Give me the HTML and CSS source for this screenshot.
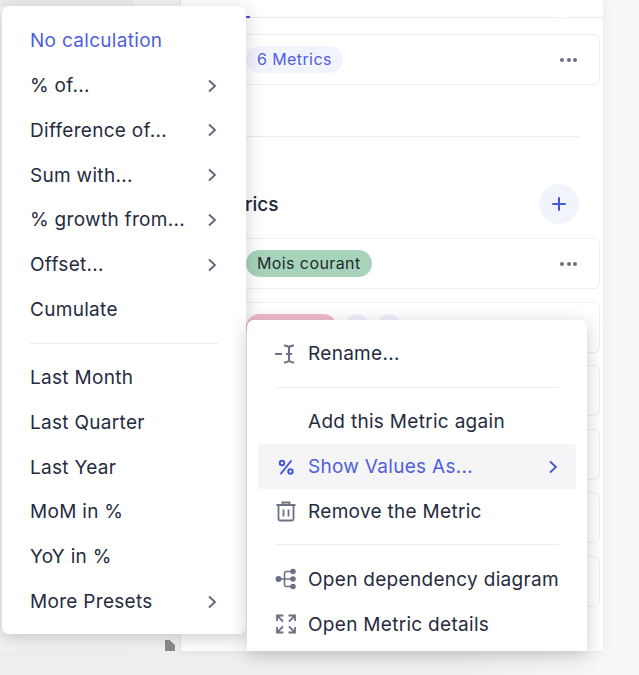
FILE: index.html
```html
<!DOCTYPE html>
<html>
	<head>
		<meta charset="UTF-8">
		<title>Show Values As</title>
		<link rel="stylesheet" href="styles.css">
	</head>
	<body>
		<div class="pagina">
			<div class="fondoIzq">
				<div class="fondoTop"></div>
				<div class="fondoCuerpo"><span class="cursor"></span></div>
			</div>
			<div class="panel">
				<div class="tabs"><span class="tabActivo"></span><span class="btnRedondo btnTabs"></span></div>
				<div class="tarjeta primera"><span class="pill lila">6 Metrics</span><span class="puntos"><i></i><i></i><i></i></span></div>
				<div class="linea"></div>
				<div class="cabecera">
					<span class="tituloSeccion">Metrics</span>
					<span class="btnRedondo">
						<svg width="16" height="16" viewBox="0 0 16 16"><path d="M8 2v12M2 8h12" stroke="#4557d6" stroke-width="2" stroke-linecap="round"/></svg>
					</span>
				</div>
				<div class="listaTarjetas">
					<div class="tarjeta"><span class="pill verde">Mois courant</span><span class="puntos"><i></i><i></i><i></i></span></div>
					<div class="tarjeta"><span class="pill rosa"></span><span class="mini"></span><span class="mini"></span></div>
					<div class="tarjeta"></div>
					<div class="tarjeta"></div>
					<div class="tarjeta"></div>
					<div class="tarjeta"></div>
				</div>
			</div>
		</div>
		<div class="fondoBajo"></div>

		<div class="menu menuCalculo">
			<div class="item activo">No calculation</div>
			<div class="item">% of...<svg class="flecha" width="10" height="14" viewBox="0 0 10 14"><path d="M2 1.500 8 7l-6 5.500"/></svg></div>
			<div class="item">Difference of...<svg class="flecha" width="10" height="14" viewBox="0 0 10 14"><path d="M2 1.500 8 7l-6 5.500"/></svg></div>
			<div class="item">Sum with...<svg class="flecha" width="10" height="14" viewBox="0 0 10 14"><path d="M2 1.500 8 7l-6 5.500"/></svg></div>
			<div class="item">% growth from...<svg class="flecha" width="10" height="14" viewBox="0 0 10 14"><path d="M2 1.500 8 7l-6 5.500"/></svg></div>
			<div class="item">Offset...<svg class="flecha" width="10" height="14" viewBox="0 0 10 14"><path d="M2 1.500 8 7l-6 5.500"/></svg></div>
			<div class="item">Cumulate</div>
			<div class="separador"></div>
			<div class="item">Last Month</div>
			<div class="item">Last Quarter</div>
			<div class="item">Last Year</div>
			<div class="item">MoM in %</div>
			<div class="item">YoY in %</div>
			<div class="item">More Presets<svg class="flecha" width="10" height="14" viewBox="0 0 10 14"><path d="M2 1.500 8 7l-6 5.500"/></svg></div>
		</div>

		<div class="menu menuMetrica">
			<div class="item">
				<svg class="icono" width="22" height="22" viewBox="0 0 22 22" fill="none" stroke="#6b7186" stroke-width="2"><path d="M0 11h7"/><path d="M9 2.500c2.500 0 4 .5 5 2 1-1.500 2.500-2 5-2M9 19.500c2.500 0 4-.5 5-2 1 1.500 2.500 2 5 2M14 4.500v13M11 11h6"/></svg>
				Rename...
			</div>
			<div class="separador"></div>
			<div class="item"><span class="icono"></span>Add this Metric again</div>
			<div class="item resaltado">
				<svg class="icono" width="22" height="22" viewBox="0 0 22 22" fill="none" stroke="#4557d6" stroke-width="2"><circle cx="7" cy="7" r="2.200"/><circle cx="15.500" cy="15.500" r="2.200"/><path d="M16 5 6 17.500" stroke-linecap="round"/></svg>
				Show Values As...
				<svg class="flecha azul" width="10" height="14" viewBox="0 0 10 14"><path d="M2 1.500 8 7l-6 5.500"/></svg>
			</div>
			<div class="item">
				<svg class="icono" width="22" height="22" viewBox="0 0 22 22" fill="none" stroke="#6b7186" stroke-width="1.800"><path d="M1.500 5h19M7.500 4.500V2.500h7v2M3.500 5v14a1.500 1.500 0 0 0 1.500 1.500h12a1.500 1.500 0 0 0 1.500-1.500V5M8.500 9.500v7M13.500 9.500v7"/></svg>
				Remove the Metric
			</div>
			<div class="separador"></div>
			<div class="item">
				<svg class="icono" width="22" height="22" viewBox="0 0 22 22" fill="#6b7186" stroke="#6b7186" stroke-width="1.600"><circle cx="3.500" cy="11" r="2.200"/><circle cx="18" cy="3.500" r="2"/><circle cx="18" cy="11" r="2"/><circle cx="18" cy="18.500" r="2"/><path fill="none" d="M3.500 11H18M9.500 11V5.500a2 2 0 0 1 2-2H18M9.500 11v5.500a2 2 0 0 0 2 2H18"/></svg>
				Open dependency diagram
			</div>
			<div class="item">
				<svg class="icono" width="22" height="22" viewBox="0 0 22 22" fill="none" stroke="#6b7186" stroke-width="1.800"><path d="M2 8V2.500h6.500M20 8V2.500h-6.500M2 14v5.500h6.500M20 14v5.500h-6.500M3 3.500l5 5M19 3.500l-5 5M3 18.500l5-5M19 18.500l-5-5"/></svg>
				Open Metric details
			</div>
		</div>
	</body>
</html>
```

FILE: styles.css
```css
html, body {
	margin: 0;
	height: 675px;
	overflow: hidden;
}
body {
	font-family: Inter, "Liberation Sans", sans-serif;
	background: #f9f8f6;
	color: #262b40;
	position: relative;
}
.pagina {
	display: flex;
	height: 651px;
}
.fondoIzq {
	width: 180px;
	display: flex;
	flex-direction: column;
	background: #f4f4f4;
}
.fondoTop {
	height: 6px;
	background: linear-gradient(to right, #ececec 135px, #f4f4f4 135px);
}
.fondoCuerpo {
	flex: 1;
	display: flex;
	justify-content: flex-end;
	align-items: flex-end;
	padding-right: 5px;
}
.cursor {
	width: 10px;
	height: 11px;
	background: #8b8b8b;
	clip-path: polygon(0 0, 45% 0, 100% 45%, 100% 100%, 0 100%);
}
.panel {
	width: 400px;
	padding-left: 19px;
	padding-right: 3px;
	background: #fff;
	border-left: 1px solid #e9e9ec;
	box-shadow: 2px 0 10px rgba(40, 40, 60, 0.06);
}
.tabs {
	height: 17px;
	border-bottom: 1px solid #e8e9ee;
	display: flex;
	justify-content: flex-end;
	align-items: flex-end;
	padding-right: 21px;
	margin-right: -3px;
	margin-left: -19px;
	position: relative;
}
.tabActivo {
	position: absolute;
	left: 0;
	bottom: -1px;
	width: 69px;
	height: 2px;
	background: #4557d6;
}
.btnTabs {
	margin-bottom: -2px;
	clip-path: inset(38px 0 0 0);
}
.btnRedondo {
	width: 40px;
	height: 40px;
	border-radius: 50%;
	background: #f2f4fd;
	display: flex;
	align-items: center;
	justify-content: center;
	flex: none;
}
.tarjeta {
	height: 51px;
	box-sizing: border-box;
	border: 1px solid #eeeff3;
	border-radius: 6px;
	display: flex;
	align-items: center;
	padding-left: 45px;
	padding-right: 22px;
	gap: 8px;
}
.primera {
	margin-top: 16px;
}
.linea {
	height: 1px;
	background: #ebecef;
	margin-top: 51px;
	margin-right: 21px;
}
.cabecera {
	display: flex;
	justify-content: space-between;
	align-items: center;
	margin-top: 47px;
	margin-right: 21px;
	height: 40px;
}
.tituloSeccion {
	font-size: 19px;
	font-weight: 500;
	color: #23273a;
	padding-left: 10px;
}
.listaTarjetas {
	display: flex;
	flex-direction: column;
	gap: 12.500px;
	margin-top: 14px;
}
.pill {
	height: 27px;
	line-height: 27px;
	border-radius: 14px;
	padding: 0 11px;
	font-size: 16px;
	letter-spacing: 0.4px;
	white-space: nowrap;
}
.lila {
	background: #f2f4fd;
	color: #4f5fdc;
}
.verde {
	background: #a6d3ba;
	color: #1f2b30;
}
.rosa {
	background: #f0bccb;
	width: 69px;
}
.mini {
	width: 24px;
	height: 27px;
	border-radius: 50%;
	background: #eef0fb;
}
.puntos {
	margin-left: auto;
	display: flex;
	gap: 2.500px;
}
.puntos i {
	width: 4px;
	height: 4px;
	border-radius: 50%;
	background: #6b6f7c;
}
.fondoBajo {
	height: 24px;
	background: linear-gradient(to right, #eeeeec 0, #eeeeec 127px, #f0efed 127px, #f0efed 460px, #f9f8f6 620px);
}

/* menus flotantes */
.menu {
	position: absolute;
	background: #fff;
	box-shadow: 0 4px 18px rgba(30, 30, 50, 0.22);
	box-sizing: border-box;
	font-size: 19px;
	letter-spacing: 0.3px;
	padding-top: 12.400px;
}
.menuCalculo {
	left: 2px;
	top: 6px;
	width: 244px;
	height: 628px;
	border-radius: 7px;
	padding-left: 8px;
	padding-right: 8px;
}
.menuCalculo .flecha {
	margin-right: 1px;
}
.menuMetrica {
	left: 247px;
	top: 320px;
	width: 340px;
	height: 331px;
	padding-top: 11.400px;
	border-radius: 7px 7px 0 0;
	padding-left: 11px;
	padding-right: 11px;
	overflow: hidden;
}
.item {
	height: 44.800px;
	display: flex;
	align-items: center;
	padding-left: 20px;
	padding-right: 20px;
	border-radius: 3px;
	white-space: nowrap;
}
.menuMetrica .item {
	padding-left: 17px;
}
.activo {
	color: #4f5fdc;
}
.resaltado {
	background: #f5f5f8;
	color: #4f5fdc;
}
.icono {
	width: 22px;
	height: 22px;
	margin-right: 11px;
	flex: none;
}
.flecha {
	margin-left: auto;
	margin-right: -2px;
	fill: none;
	stroke: #5f6578;
	stroke-width: 1.800;
	flex: none;
}
.azul {
	stroke: #4557d6;
}
.separador {
	height: 1px;
	background: #ecedf0;
	margin: 10.600px 20px 11.600px 20px;
}
.menuMetrica .separador {
	margin-left: 17px;
	margin-right: 17px;
}
```
